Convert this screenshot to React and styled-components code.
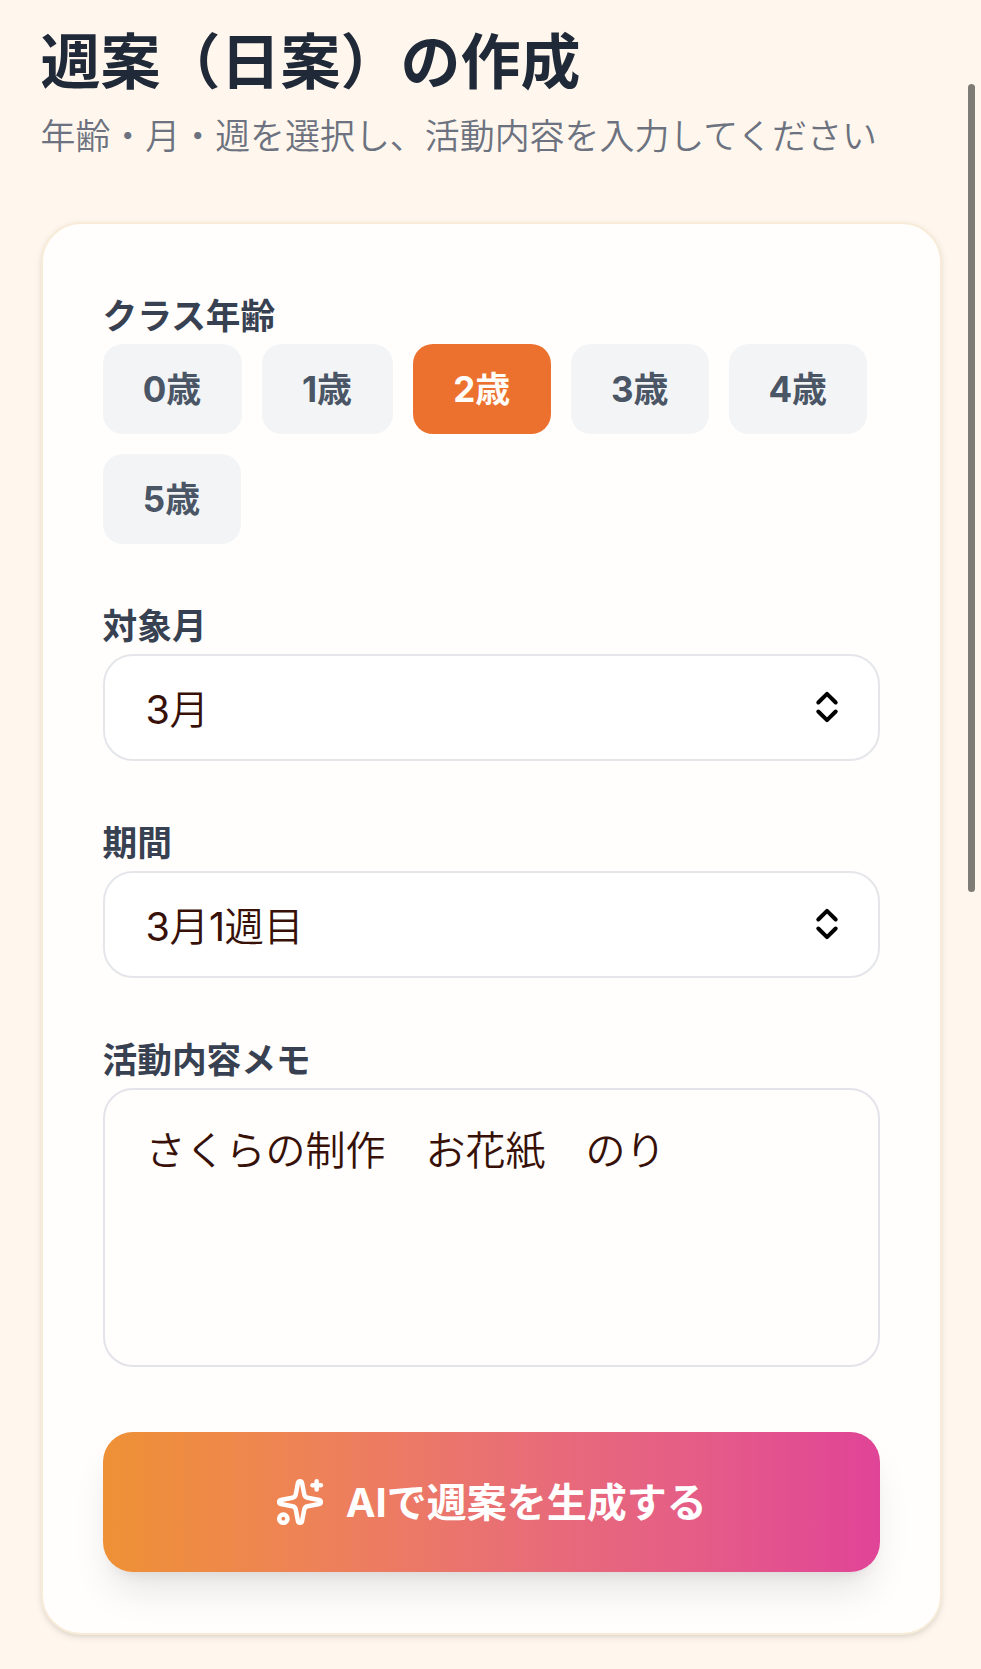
import React, { useState } from "react";
import styled, { createGlobalStyle } from "styled-components";
import { Sparkles } from "lucide-react";

const GlobalStyle = createGlobalStyle`
  *, *::before, *::after { box-sizing: border-box; }
  html, body { margin: 0; padding: 0; background: #fff7ed; overflow: hidden; }
  body, button, textarea {
    font-family: Inter, "Noto Sans CJK JP", sans-serif;
  }
`;

const Page = styled.main`
  position: relative;
  height: 1669px;
  padding: 25px 39.5px 0 41px;
  background: #fff7ed;
`;

const Title = styled.h1`
  margin: 0 0 0 -0.5px;
  font-size: 60px;
  line-height: 75px;
  font-weight: 700;
  color: #202938;
`;

const Subtitle = styled.p`
  margin: 11px 0 60.5px -0.5px;
  font-size: 34.95px;
  line-height: 50px;
  font-weight: 350;
  white-space: nowrap;
  color: #6c727f;
`;

const Card = styled.section`
  display: flex;
  flex-direction: column;
  gap: 50px;
  height: 1413.5px;
  padding: 60px 59.5px 59px;
  border: 2px solid #f8ecd9;
  border-radius: 40px;
  background: #fffefc;
  box-shadow: 0 2.5px 7px rgba(0, 0, 0, 0.09), 0 2.5px 5px -2.5px rgba(0, 0, 0, 0.09);
`;

const Field = styled.div`
  display: flex;
  flex-direction: column;
`;

const Label = styled.label`
  height: 60px;
  padding-top: 6px;
  font-size: 34.7px;
  line-height: 52px;
  font-weight: 700;
  color: #374151;
`;

const AgeList = styled.div`
  display: flex;
  flex-wrap: wrap;
  gap: 20px;
`;

const AgeButton = styled.button`
  width: ${(p) => p.$width}px;
  height: 90px;
  padding: 0;
  border: 0;
  border-radius: 20px;
  font-size: 35px;
  line-height: 50px;
  font-weight: 700;
  white-space: nowrap;
  color: ${(p) => (p.$active ? "#fffdf9" : "#4a5565")};
  background: ${(p) => (p.$active ? "#ed712e" : "#f2f4f6")};
`;

const SelectBox = styled.div`
  display: flex;
  align-items: center;
  justify-content: space-between;
  height: 107.3px;
  padding: 0 38.5px 0 41px;
  border: 2px solid #e4e6ea;
  border-radius: 30px;
  background: #fff;
  font-size: 39.5px;
  font-weight: 350;
  line-height: 60px;
  color: #371108;
`;

const SelectValue = styled.span`
  padding-top: 5px;
`;

const Digit = styled.span`
  font-weight: 400;
  letter-spacing: -0.5px;
`;

const Memo = styled.textarea`
  display: block;
  width: 100%;
  height: 279px;
  padding: 30.5px 41px;
  border: 2px solid #e3e3ea;
  border-radius: 30px;
  resize: none;
  outline: none;
  overflow: hidden;
  background: transparent;
  font-size: 40px;
  font-weight: 350;
  line-height: 60px;
  color: #371108;
`;

const SubmitButton = styled.button`
  display: flex;
  align-items: center;
  justify-content: center;
  gap: 21px;
  flex: none;
  height: 140.3px;
  margin-top: 15px;
  padding: 0 1px 0 0;
  border: 0;
  border-radius: 30px;
  font-size: 40px;
  font-weight: 700;
  line-height: 60px;
  color: #fff;
  background: linear-gradient(90deg, #ee9135 0%, #ee8454 24%, #ec7a64 38%, #e86d77 55%, #e55c87 77%, #e04497 100%);
  box-shadow: 0 25px 38px -7.5px rgba(0, 0, 0, 0.1), 0 10px 15px -10px rgba(0, 0, 0, 0.1);
`;

const SubmitText = styled.span`
  padding-top: 2px;
`;

const ScrollThumb = styled.div`
  position: absolute;
  top: 84px;
  right: 6px;
  width: 7.5px;
  height: 807.5px;
  border-radius: 4px;
  background: #7f7b77;
`;

const UpDownIcon = () => (
  <svg width="26" height="36" viewBox="0 0 26 36" fill="none" stroke="#000" strokeWidth="4" strokeLinecap="round" strokeLinejoin="round">
    <path d="M4.3 13.5 13 4.9l8.7 8.6M4.3 22.5 13 31.1l8.7-8.6" />
  </svg>
);

const ages = [
  { label: "0歳", width: 139 },
  { label: "1歳", width: 131 },
  { label: "2歳", width: 138.5 },
  { label: "3歳", width: 137.5 },
  { label: "4歳", width: 138.5 },
  { label: "5歳", width: 138 },
];

const SelectField = ({ label, value }) => (
  <Field>
    <Label>{label}</Label>
    <SelectBox role="combobox">
      <SelectValue>
        {value.split(/(\d+)/).map((part, i) => (i % 2 ? <Digit key={i}>{part}</Digit> : part))}
      </SelectValue>
      <UpDownIcon />
    </SelectBox>
  </Field>
);

export default function App() {
  const [age, setAge] = useState("2歳");
  return (
    <Page lang="ja">
      <GlobalStyle />
      <Title>週案（日案）の作成</Title>
      <Subtitle>年齢・月・週を選択し、活動内容を入力してください</Subtitle>
      <Card>
        <Field>
          <Label>クラス年齢</Label>
          <AgeList>
            {ages.map((a) => (
              <AgeButton key={a.label} $width={a.width} $active={a.label === age} onClick={() => setAge(a.label)}>
                {a.label}
              </AgeButton>
            ))}
          </AgeList>
        </Field>
        <SelectField label="対象月" value="3月" />
        <SelectField label="期間" value="3月1週目" />
        <Field>
          <Label htmlFor="memo">活動内容メモ</Label>
          <Memo id="memo" spellCheck={false} defaultValue="さくらの制作　お花紙　のり" />
        </Field>
        <SubmitButton>
          <Sparkles size={50} strokeWidth={2.15} />
          <SubmitText>AIで週案を生成する</SubmitText>
        </SubmitButton>
      </Card>
      <ScrollThumb />
    </Page>
  );
}
